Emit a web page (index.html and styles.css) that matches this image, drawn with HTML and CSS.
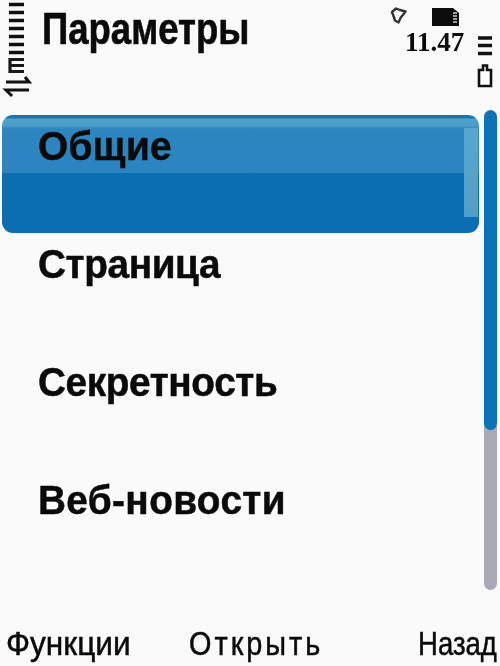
FILE: index.html
```html
<!DOCTYPE html>
<html lang="ru">
<head>
<meta charset="utf-8">
<title>Параметры</title>
<link rel="stylesheet" href="styles.css">
</head>
<body>
<div class="screen">
  <header class="header">
    <div class="signal">
      <svg class="signal-icon" width="32" height="100" viewBox="0 0 32 100">
        <path d="M9 4.500H24M9 12.500H24M9 20.500H24M9 28.500H24M9 36.500H24M9 44.500H24M9 52.500H24" fill="none" stroke="#111" stroke-width="3.400"/>
        <path d="M24 59.500H10V71.500H24M10 65.500H24" fill="none" stroke="#1a1a1a" stroke-width="3.200"/>
        <path d="M6 82H29L25 77M29 90H6L12 96" fill="none" stroke="#111" stroke-width="3"/>
      </svg>
    </div>
    <h1 class="title"><span>Параметры</span></h1>
    <div class="status">
      <div class="status-top">
        <svg class="alarm" width="18" height="18" viewBox="0 0 18 18"><path d="M2 5L6 1.500L10 3L15.500 4.500L12.500 8.500L11 10L8.500 15.500L5 13.500L3.500 9Z" fill="none" stroke="#333" stroke-width="2.400" stroke-linejoin="round"/></svg>
        <svg class="card" width="27" height="18" viewBox="0 0 27 18"><path d="M0 0H21L27 5V18H0Z" fill="#0c0c0c"/><path d="M21 5h4M21 8h4M21 11h4M21 14h4" stroke="#ccc" stroke-width="1.400"/></svg>
      </div>
      <div class="status-bottom">
        <time class="clock">11.47</time>
        <svg class="battery" width="16" height="54" viewBox="0 0 16 54"><path d="M1 3h14M1 10.500h14M1 18.500h14" stroke="#111" stroke-width="3.500"/><path d="M2 35H6V30.500H10V35H14V51H2Z" fill="#fff" stroke="#111" stroke-width="2.600"/></svg>
      </div>
    </div>
  </header>
  <main class="main">
    <ul class="list">
      <li class="item item-selected"><span class="wide">Общие</span></li>
      <li class="item"><span class="tight">Страница</span></li>
      <li class="item"><span class="tight">Секретность</span></li>
      <li class="item"><span class="wide">Веб-новости</span></li>
    </ul>
    <div class="scrollbar"><div class="scroll-thumb"></div></div>
  </main>
  <footer class="softkeys">
    <span class="key key-left">Функции</span>
    <span class="key key-mid">Открыть</span>
    <span class="key key-right">Назад</span>
  </footer>
</div>
</body>
</html>
```
FILE: styles.css
```css
* { box-sizing: border-box; margin: 0; padding: 0; }
html, body { width: 500px; height: 666px; overflow: hidden; background: #fafafa; }
body { font-family: "Liberation Sans", sans-serif; color: #0a0a0a; }
.screen { width: 500px; height: 666px; display: flex; flex-direction: column; background: #fafafa; filter: blur(0.35px); }

.header { height: 115px; display: flex; }
.signal { width: 42px; flex: none; }
.signal-icon { display: block; }
.title { flex: none; width: 340px; font-size: 44px; line-height: 58px; font-weight: 700; -webkit-text-stroke: 0.6px #0a0a0a; }
.title span { display: inline-block; transform: scaleX(0.83); transform-origin: left center; }
.status { flex: 1; display: flex; flex-direction: column; padding-top: 6px; }
.status-top { display: flex; padding-left: 8px; height: 26px; }
.alarm { margin-right: 24px; margin-top: 1px; }
.card { margin-top: 2px; }
.status-bottom { display: flex; padding-left: 23px; }
.clock { font-family: "Liberation Serif", serif; font-weight: 700; font-size: 27px; line-height: 20px; width: 72px; }
.battery { margin-top: 3px; }

.main { display: flex; height: 475px; }
.list { list-style: none; width: 482px; padding-left: 2px; }
.item { height: 118px; padding: 7px 0 0 36px; font-size: 41px; line-height: 48px; font-weight: 700; -webkit-text-stroke: 0.5px #0a0a0a; }
.item span { display: inline-block; transform: scaleX(0.945); transform-origin: left center; }
.item .wide { letter-spacing: 0.4px; }
.item .tight { letter-spacing: -0.4px; }
.item-selected {
  width: 477px;
  border-radius: 11px;
  background:
    linear-gradient(#5aa7ce, #4f9fc9) right 1px top 13px / 14px 89px no-repeat,
    linear-gradient(#1276b6 0, #1276b6 3px, #4fa3cd 4px, #4a9cc9 11px, #2c86c0 14px, #2a84bf 58px, #0a6fb2 58px, #0a6fb2 100%);
}
.scrollbar { width: 13px; height: 480px; margin: -5px 0 0 2px; border-radius: 7px; background: #a9a9b6; overflow: hidden; }
.scroll-thumb { height: 320px; background: #0c73b6; border-radius: 7px; }

.softkeys { flex: 1; display: flex; align-items: flex-start; padding-top: 33px; font-size: 34px; line-height: 40px; -webkit-text-stroke: 0.5px #0a0a0a; }
.key { display: block; transform-origin: left center; flex: none; }
.key-left { margin-left: 6px; width: 183px; transform: scaleX(0.93); }
.key-mid { width: 229px; letter-spacing: 3.5px; transform: scaleX(0.85); }
.key-right { transform: scaleX(0.81); }
```
